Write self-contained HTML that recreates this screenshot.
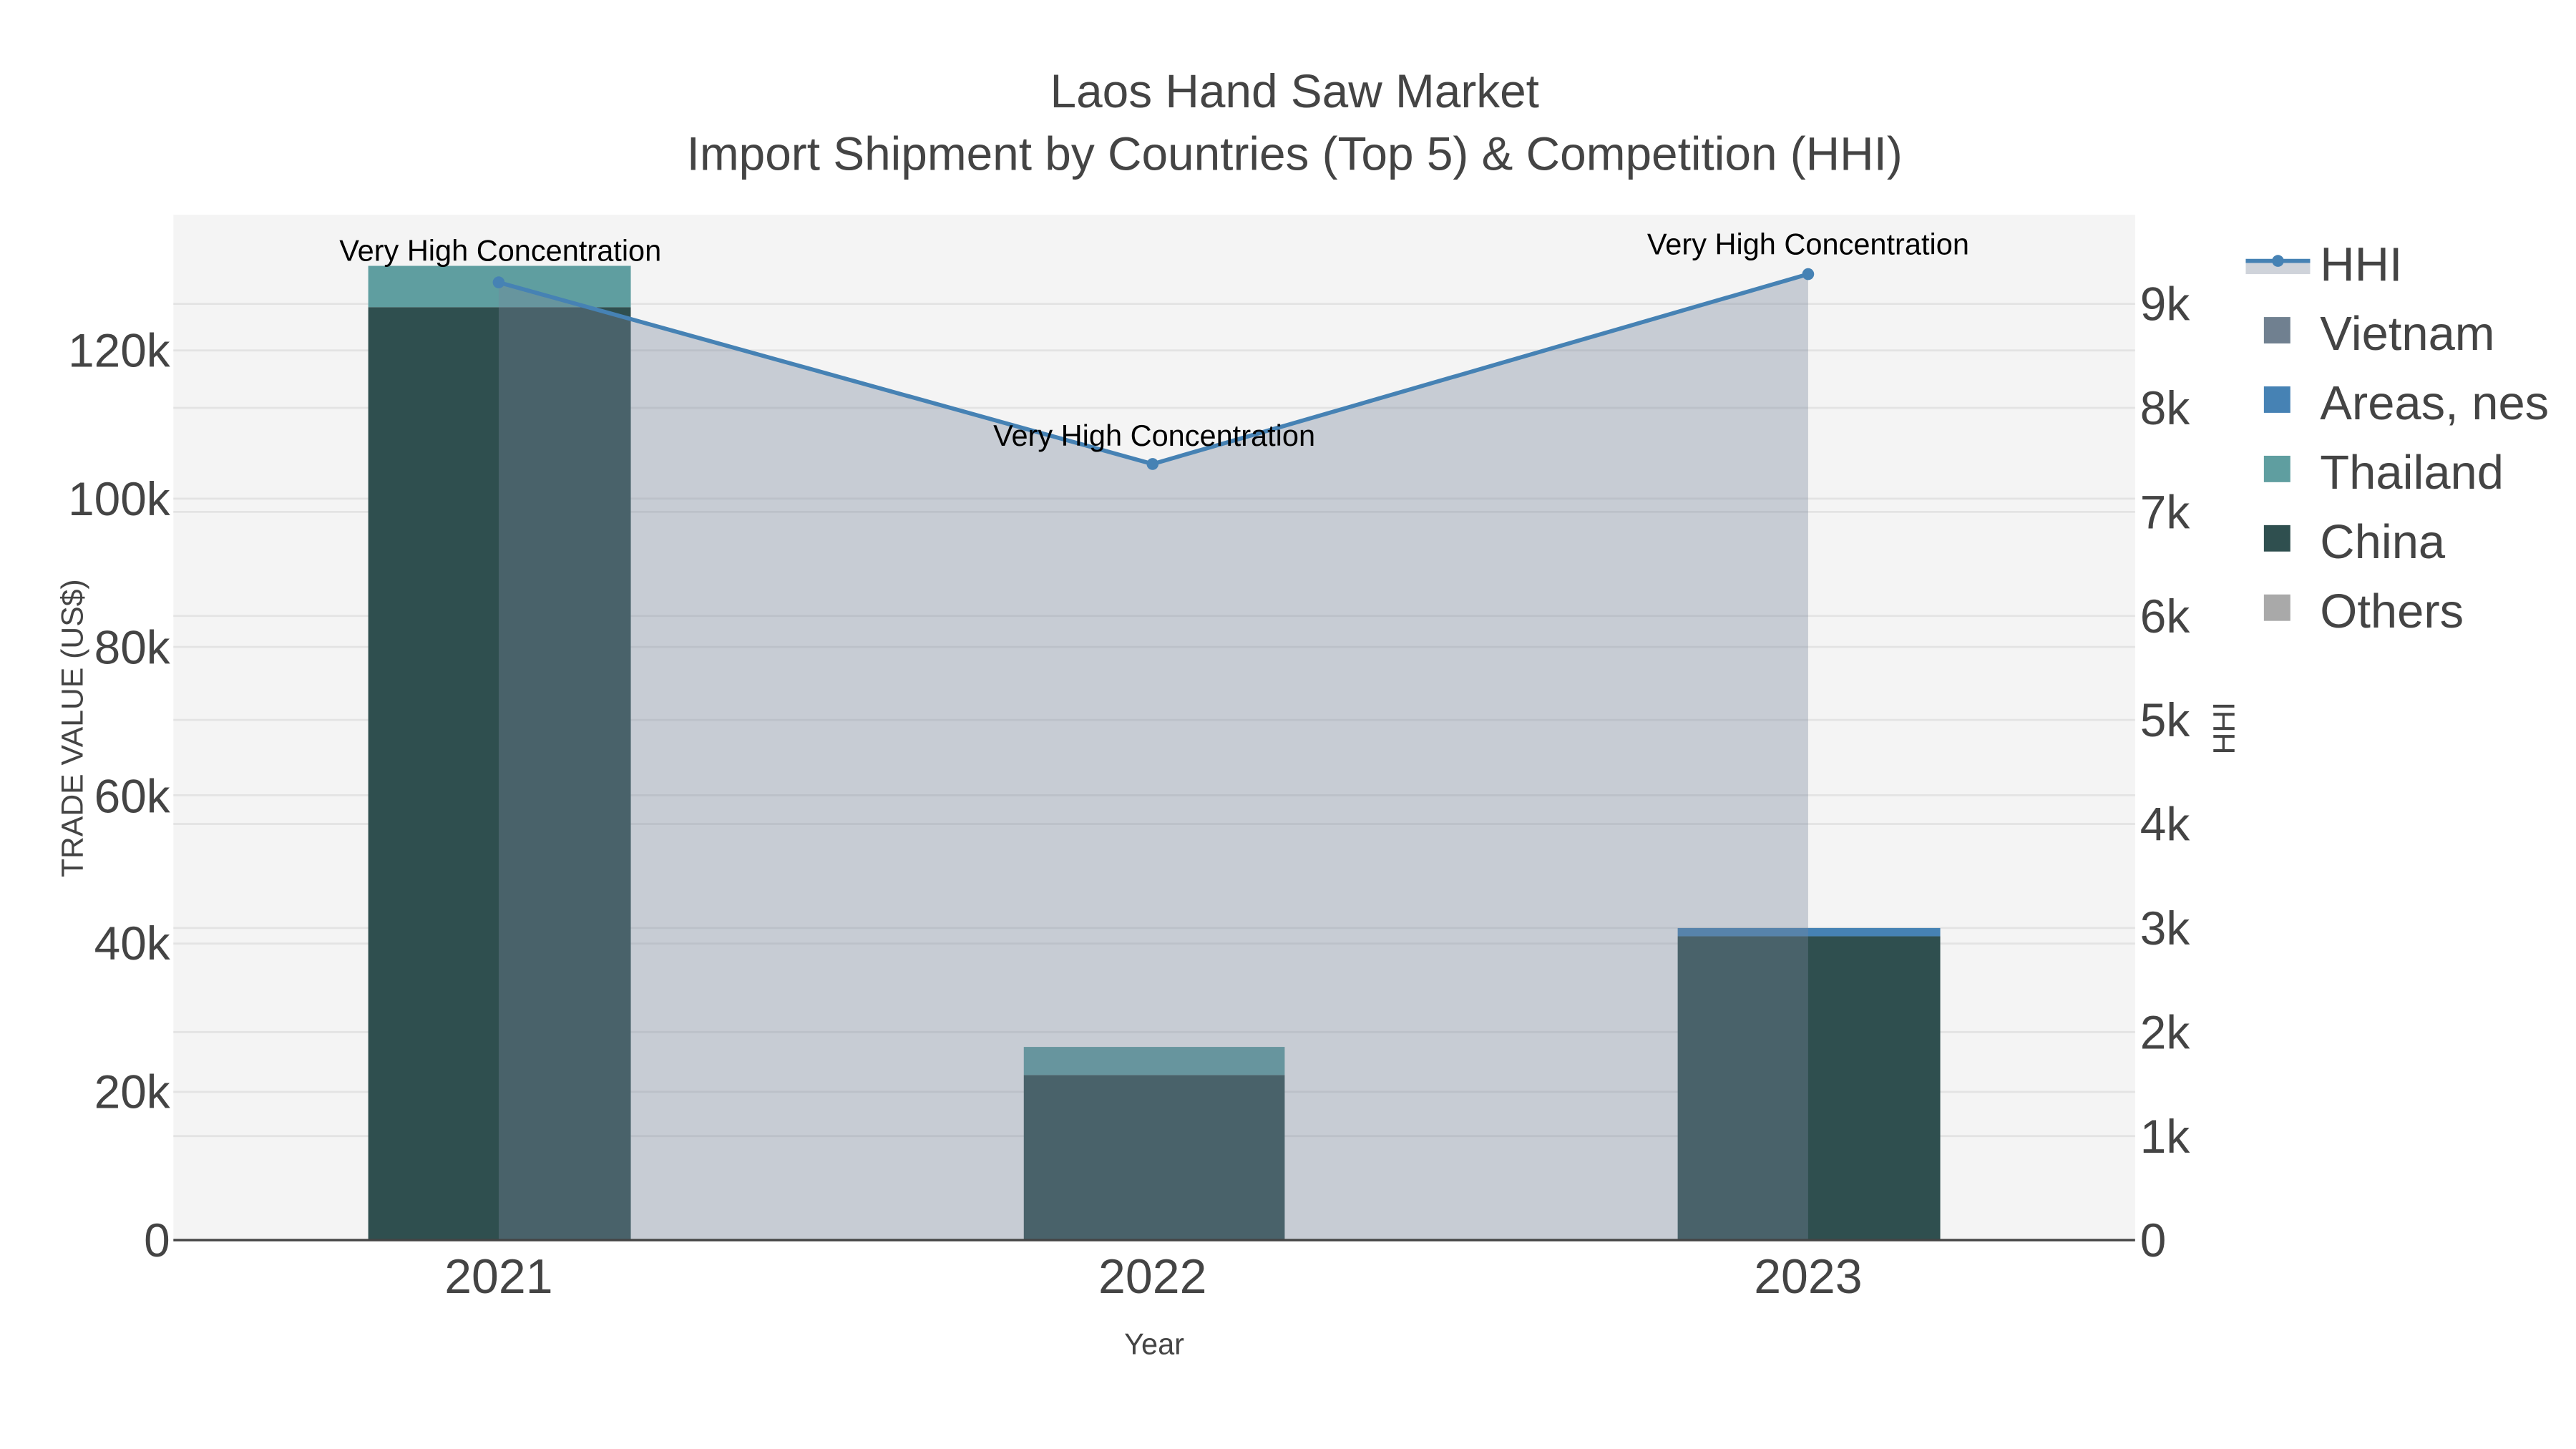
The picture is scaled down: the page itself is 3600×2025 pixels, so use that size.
<!DOCTYPE html>
<html><head><meta charset="utf-8"><style>html,body{margin:0;padding:0;background:#fff}svg{display:block}</style></head>
<body>
<svg width="3600" height="2025" viewBox="0 0 1560 877.5" xmlns="http://www.w3.org/2000/svg" font-family="Liberation Sans, sans-serif">
<rect width="1560" height="877.5" fill="#fff"/>
<rect x="105" y="130" width="1188" height="621" fill="#f4f4f4"/>
<g stroke="#e3e3e3" stroke-width="1.2">
<line x1="105" x2="1293" y1="661.2" y2="661.2"/><line x1="105" x2="1293" y1="571.4" y2="571.4"/><line x1="105" x2="1293" y1="481.6" y2="481.6"/><line x1="105" x2="1293" y1="391.8" y2="391.8"/><line x1="105" x2="1293" y1="302" y2="302"/><line x1="105" x2="1293" y1="212.2" y2="212.2"/>
<line x1="105" x2="1293" y1="688" y2="688"/><line x1="105" x2="1293" y1="625" y2="625"/><line x1="105" x2="1293" y1="562" y2="562"/><line x1="105" x2="1293" y1="499" y2="499"/><line x1="105" x2="1293" y1="436" y2="436"/><line x1="105" x2="1293" y1="373" y2="373"/><line x1="105" x2="1293" y1="310" y2="310"/><line x1="105" x2="1293" y1="247" y2="247"/><line x1="105" x2="1293" y1="184" y2="184"/>
</g>
<rect x="223" y="186" width="159" height="565" fill="#2f4f4f"/>
<rect x="223" y="161" width="159" height="25" fill="#5f9ea0"/>
<rect x="620" y="651" width="158" height="100" fill="#2f4f4f"/>
<rect x="620" y="634" width="158" height="17" fill="#5f9ea0"/>
<rect x="1016" y="567" width="159" height="184" fill="#2f4f4f"/>
<rect x="1016" y="562" width="159" height="5" fill="#4682b4"/>
<polygon points="302,171 698,281 1095,166 1095,751 302,751" fill="rgba(120,134,154,0.36)"/>
<polyline points="302,171 698,281 1095,166" fill="none" stroke="#4682b4" stroke-width="2.5"/>
<circle cx="302" cy="171" r="3.6" fill="#4682b4"/><circle cx="698" cy="281" r="3.6" fill="#4682b4"/><circle cx="1095" cy="166" r="3.6" fill="#4682b4"/>
<line x1="105" x2="1293" y1="751" y2="751" stroke="#444" stroke-width="1.5"/>
<g font-size="18" fill="#000" text-anchor="middle">
<text x="303" y="158">Very High Concentration</text>
<text x="699" y="270">Very High Concentration</text>
<text x="1095" y="154">Very High Concentration</text>
</g>
<g fill="#444" text-anchor="middle" font-size="28.5">
<text x="784" y="65">Laos Hand Saw Market</text>
<text x="784" y="103">Import Shipment by Countries (Top 5) &amp; Competition (HHI)</text>
</g>
<g fill="#444" font-size="28.5" text-anchor="end">
<text x="103" y="761">0</text><text x="103" y="671">20k</text><text x="103" y="581">40k</text><text x="103" y="492">60k</text><text x="103" y="402">80k</text><text x="103" y="312">100k</text><text x="103" y="222">120k</text>
</g>
<g fill="#444" font-size="28.5" text-anchor="start">
<text x="1296" y="761">0</text><text x="1296" y="698">1k</text><text x="1296" y="635">2k</text><text x="1296" y="572">3k</text><text x="1296" y="509">4k</text><text x="1296" y="446">5k</text><text x="1296" y="383">6k</text><text x="1296" y="320">7k</text><text x="1296" y="257">8k</text><text x="1296" y="194">9k</text>
</g>
<g fill="#444" font-size="29.5" text-anchor="middle">
<text x="302" y="783">2021</text><text x="698" y="783">2022</text><text x="1095" y="783">2023</text>
</g>
<text x="699" y="820" fill="#444" font-size="18" text-anchor="middle">Year</text>
<text transform="translate(50,441) rotate(-90)" fill="#444" font-size="18.5" text-anchor="middle">TRADE VALUE (US$)</text>
<text transform="translate(1353,441) rotate(-90)" fill="#444" font-size="18.5" text-anchor="middle">HHI</text>
<rect x="1360" y="158" width="39" height="8" fill="#cfd3da"/>
<line x1="1360" x2="1399" y1="158" y2="158" stroke="#4682b4" stroke-width="2.5"/>
<circle cx="1379.5" cy="158" r="3.6" fill="#4682b4"/>
<rect x="1371" y="192" width="16" height="16" fill="#708090"/>
<rect x="1371" y="234" width="16" height="16" fill="#4682b4"/>
<rect x="1371" y="276" width="16" height="16" fill="#5f9ea0"/>
<rect x="1371" y="318" width="16" height="16" fill="#2f4f4f"/>
<rect x="1371" y="360" width="16" height="16" fill="#a9a9a9"/>
<g fill="#444" font-size="29">
<text x="1405" y="170">HHI</text><text x="1405" y="212">Vietnam</text><text x="1405" y="254">Areas, nes</text><text x="1405" y="296">Thailand</text><text x="1405" y="338">China</text><text x="1405" y="380">Others</text>
</g>
</svg>
</body></html>
